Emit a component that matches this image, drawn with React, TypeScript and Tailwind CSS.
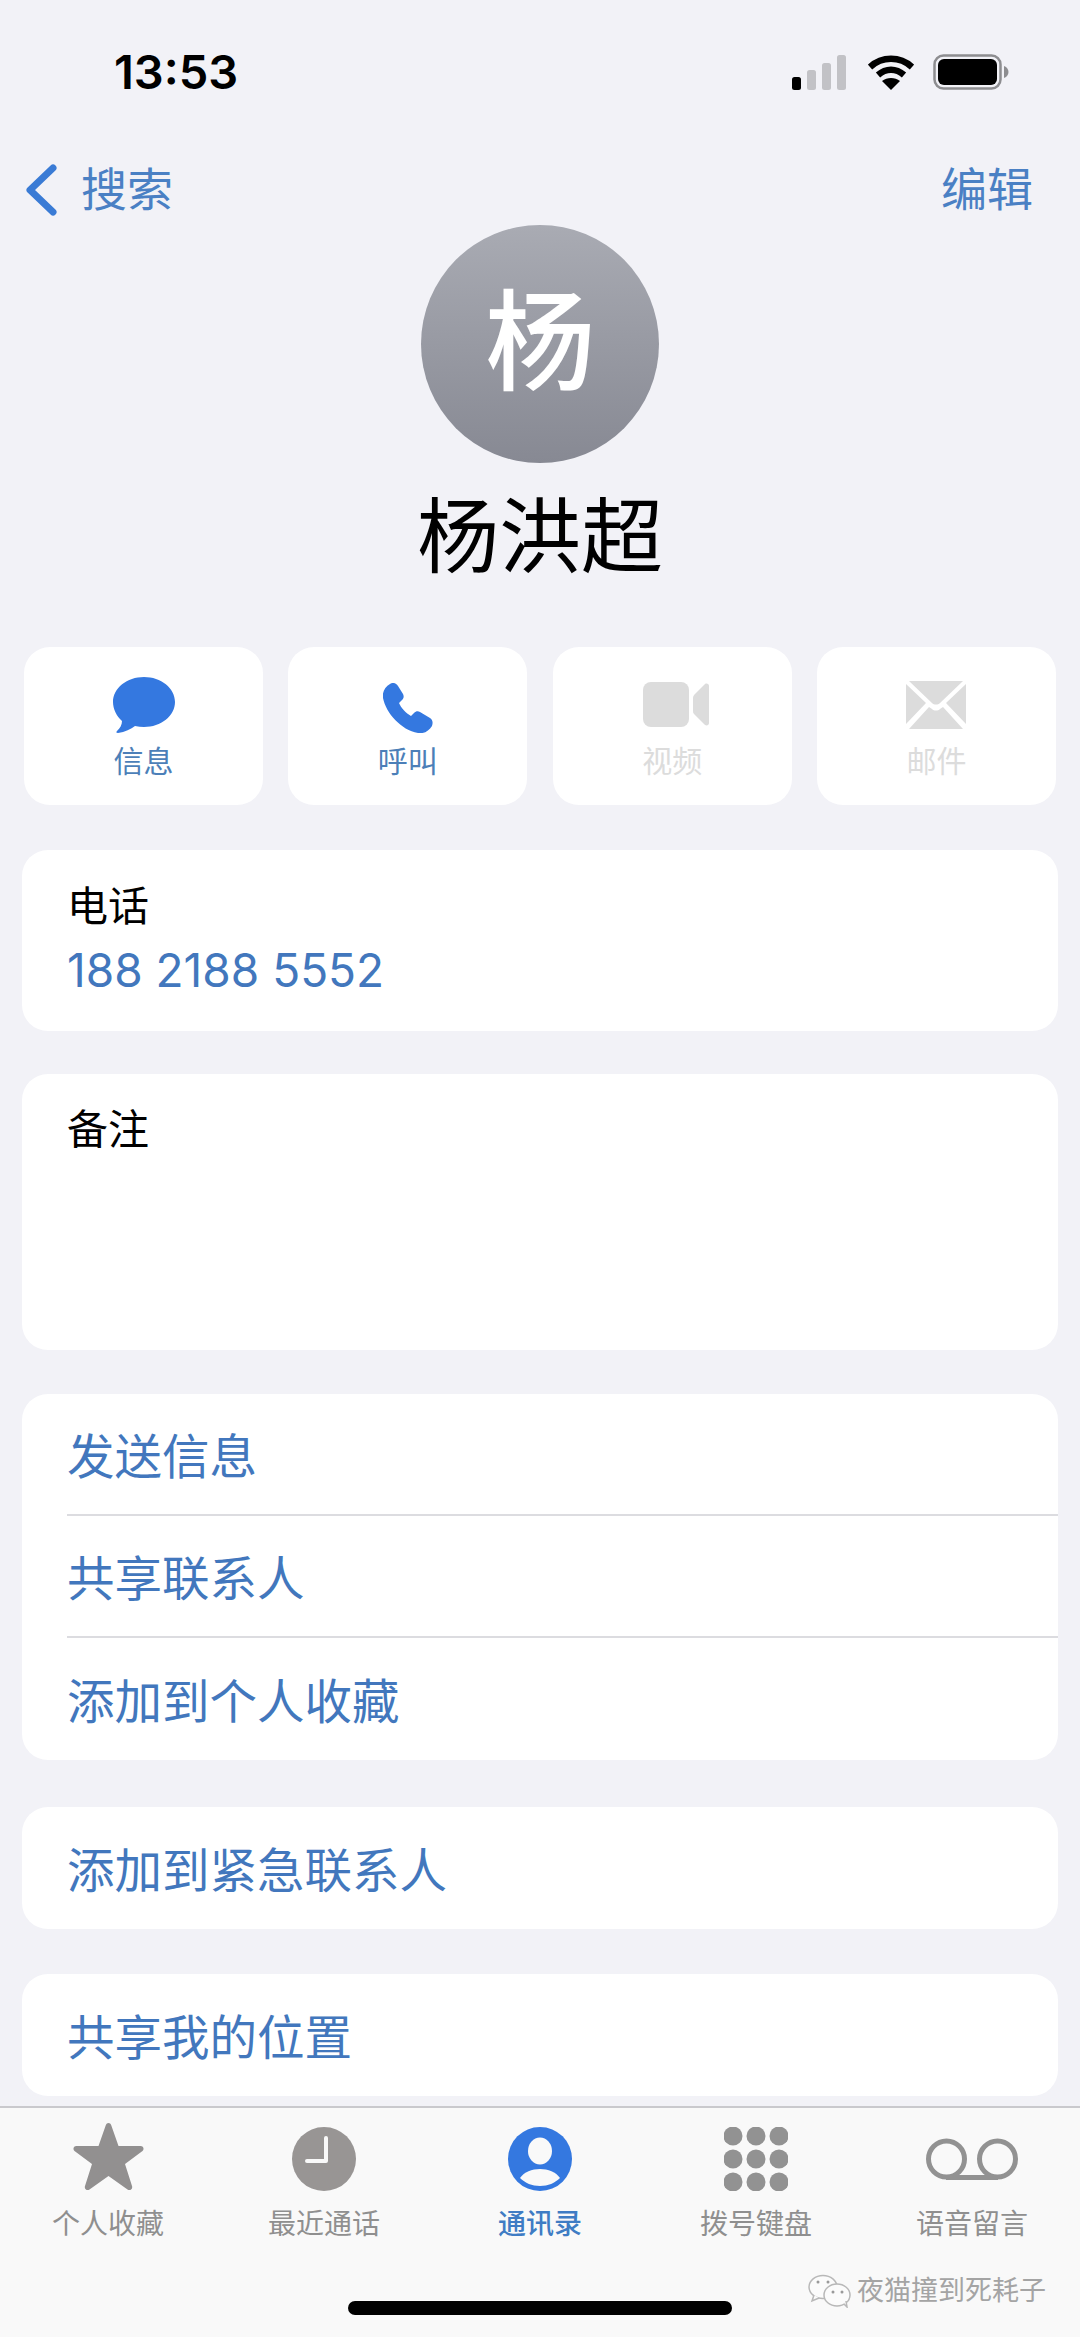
const CJK = "font-['Liberation_Sans','Noto_Sans_CJK_SC',sans-serif]";

function ActionCard({ label, disabled, children }: { label: string; disabled?: boolean; children: React.ReactNode }) {
  return (
    <div className="w-[239px] h-[158px] bg-white rounded-[26px] flex flex-col items-center">
      <div className="h-[97px] w-full flex items-end justify-center pb-[11px]">{children}</div>
      <span className={`text-[30px] leading-[36px] ${disabled ? "text-[#dcdcdc]" : "text-[#4c7fb8]"}`}>{label}</span>
    </div>
  );
}

function Row({ label, border }: { label: string; border?: boolean }) {
  return (
    <div className="h-[122px] pl-[45px]">
      <div className={`h-full flex items-center text-[47.5px] text-[#4277bd] pt-[7px] ${border ? "border-b-2 border-[#dcdce0]" : ""}`}>
        {label}
      </div>
    </div>
  );
}

function Tab({ label, active, children }: { label: string; active?: boolean; children: React.ReactNode }) {
  return (
    <div className="w-[216px] flex flex-col items-center">
      <div className="h-[70px] flex items-end justify-center">{children}</div>
      <span className={`mt-[17px] text-[28px] leading-[34px] ${active ? "text-[#3f7cc4] font-medium" : "text-[#8f8f8f]"}`}>{label}</span>
    </div>
  );
}

export default function App() {
  return (
    <div className={`${CJK} relative w-[1080px] h-[2337px] overflow-hidden bg-[#f2f2f7] flex flex-col`}>
      {/* status bar */}
      <div className="h-[155px] flex justify-between items-start pt-[45px] pl-[114px] pr-[71px]">
        <span className="font-['Inter',sans-serif] font-semibold text-[47px] leading-[54px] text-black">13:53</span>
        <div className="flex items-center pt-[9px]">
          <svg width="55" height="35" viewBox="0 0 55 35" className="mr-[21px]">
            <rect x="0" y="22" width="9" height="13" rx="2.5" fill="#000" />
            <rect x="15" y="15" width="9" height="20" rx="2.5" fill="#c2c2c6" />
            <rect x="30" y="8" width="9" height="27" rx="2.5" fill="#c2c2c6" />
            <rect x="45" y="0" width="9" height="35" rx="2.5" fill="#c2c2c6" />
          </svg>
          <svg width="46" height="35" viewBox="0 0 46 35" className="mr-[19px]">
            <path d="M2 12C14 1 32 1 44 12" fill="none" stroke="#000" strokeWidth="6.5" />
            <path d="M10 20c8-7 18-7 26 0" fill="none" stroke="#000" strokeWidth="6.5" />
            <path d="M14 26c5-4 13-4 18 0L23 35z" fill="#000" />
          </svg>
          <svg width="76" height="36" viewBox="0 0 76 36">
            <rect x="1.5" y="1.5" width="66" height="33" rx="9" fill="none" stroke="#8d8d90" strokeWidth="2.5" />
            <rect x="5" y="5" width="59" height="26" rx="6" fill="#000" />
            <path d="M71 12c3 1 4.500 3.500 4.500 6s-1.500 5-4.500 6z" fill="#8d8d90" />
          </svg>
        </div>
      </div>

      {/* nav bar */}
      <div className="h-[70px] flex justify-between items-center pl-[25px] pr-[47px]">
        <div className="flex items-center gap-[24px]">
          <svg width="32" height="52" viewBox="0 0 32 52">
            <path d="M28 4L5 26l23 22" fill="none" stroke="#3a7bd5" strokeWidth="7" strokeLinecap="round" strokeLinejoin="round" />
          </svg>
          <span className="text-[46px] leading-[54px] text-[#4a80c4]">搜索</span>
        </div>
        <span className="text-[46px] leading-[54px] text-[#4a80c4]">编辑</span>
      </div>

      {/* contact head */}
      <div className="flex flex-col items-center">
        <div className="w-[238px] h-[238px] rounded-full bg-gradient-to-b from-[#a9abb3] to-[#878993] flex items-center justify-center">
          <span className="text-white text-[110px] leading-none font-medium">杨</span>
        </div>
        <div className="mt-[20px] h-[110px] flex items-center text-[82px] leading-none text-black">杨洪超</div>
      </div>

      <div className="mt-[54px] px-[22px] flex flex-col">
        {/* action buttons */}
        <div className="mb-[45px] px-[2px] flex justify-between">
          <ActionCard label="信息">
            <svg width="62" height="56" viewBox="0 0 62 56">
              <path d="M31 0c17 0 31 11 31 25S48 50 31 50c-3 0-6-.3-9-1-4 3-10 6-17 7-2 0-2-1-1-2 3-3 5-6 5-10C3.500 39 0 32 0 25 0 11 14 0 31 0z" fill="#3478e0" />
            </svg>
          </ActionCard>
          <ActionCard label="呼叫">
            <svg width="50" height="50" viewBox="0 0 50 50">
              <path d="M7 1c3-2 6-1 8 2l5 8c1 2 1 4-1 6l-3 3c2 5 7 10 12 13l3-3c2-2 4-2 6-1l10 6c3 2 3 5 2 8-3 5-8 8-14 7C18 47 3 30 0 15-1 9 2 4 7 1z" fill="#3478e0" />
            </svg>
          </ActionCard>
          <ActionCard label="视频" disabled>
            <svg width="66" height="46" viewBox="0 0 66 46" className="mb-[5px] ml-[7px]">
              <rect x="0" y="0" width="46" height="45" rx="8" fill="#dcdcdc" />
              <path d="M50 16c0-2 1-3 2-4l10-10c2-1 4 0 4 2v37c0 2-2 3-4 2L52 33c-1-1-2-2-2-4z" fill="#dcdcdc" />
            </svg>
          </ActionCard>
          <ActionCard label="邮件" disabled>
            <svg width="60" height="48" viewBox="0 0 60 48" className="mb-[4px]">
              <path d="M3 0h54L34 22c-2 2-6 2-8 0z" fill="#dcdcdc" />
              <path d="M0 3l20 19L0 43zM60 3L40 22l20 21z" fill="#dcdcdc" />
              <path d="M3 48l20-22 3 2c2 2 6 2 8 0l3-2 20 22z" fill="#dcdcdc" />
            </svg>
          </ActionCard>
        </div>

        {/* phone */}
        <div className="h-[181px] bg-white rounded-[26px] pl-[45px] pt-[30px] mb-[43px]">
          <div className="text-[41px] leading-[54px] text-black">电话</div>
          <div className="font-['Inter',sans-serif] text-[46px] leading-[72px] text-[#4277bd]">188 2188 5552</div>
        </div>

        {/* notes */}
        <div className="h-[276px] bg-white rounded-[26px] pl-[45px] pt-[29px] mb-[44px]">
          <div className="text-[41px] leading-[54px] text-black">备注</div>
        </div>

        <div className="bg-white rounded-[26px] mb-[47px]">
          <Row label="发送信息" border />
          <Row label="共享联系人" border />
          <Row label="添加到个人收藏" />
        </div>

        <div className="bg-white rounded-[26px] mb-[45px]">
          <Row label="添加到紧急联系人" />
        </div>

        <div className="bg-white rounded-[26px]">
          <Row label="共享我的位置" />
        </div>
      </div>

      {/* tab bar */}
      <div className="mt-auto h-[231px] bg-[#f9f9f9] border-t-2 border-[#c9c9cd] flex pt-[13px]">
        <Tab label="个人收藏">
          <svg width="71" height="68" viewBox="0 0 71 68">
            <path d="M35.500 0c1.500 0 2.500 1 3 3l7 20h22c3 0 4 3 2 5L52 41l7 22c1 3-2 5-4.500 3.500L35.500 53 16.500 66.500C14 68 11 66 12 63l7-22L1.500 28c-2-2-1-5 2-5h22l7-20c.5-2 1.500-3 3-3z" fill="#929090" />
          </svg>
        </Tab>
        <Tab label="最近通话">
          <svg width="64" height="64" viewBox="0 0 64 64">
            <circle cx="32" cy="32" r="32" fill="#989594" />
            <path d="M34 11v23H15" fill="none" stroke="#f9f9f9" strokeWidth="4" strokeLinecap="round" strokeLinejoin="round" />
          </svg>
        </Tab>
        <Tab label="通讯录" active>
          <svg width="64" height="64" viewBox="0 0 64 64">
            <circle cx="32" cy="32" r="32" fill="#3478e0" />
            <ellipse cx="32" cy="24" rx="12" ry="13.500" fill="#f9f9f9" />
            <path d="M12 51c4-6 12-9 20-9s16 3 20 9c-5 5-12 8-20 8s-15-3-20-8z" fill="#f9f9f9" />
          </svg>
        </Tab>
        <Tab label="拨号键盘">
          <svg width="64" height="64" viewBox="0 0 64 64">
            <g fill="#929292">
              <circle cx="9" cy="9" r="9.500" /><circle cx="32" cy="9" r="9.500" /><circle cx="55" cy="9" r="9.500" />
              <circle cx="9" cy="32" r="9.500" /><circle cx="32" cy="32" r="9.500" /><circle cx="55" cy="32" r="9.500" />
              <circle cx="9" cy="55" r="9.500" /><circle cx="32" cy="55" r="9.500" /><circle cx="55" cy="55" r="9.500" />
            </g>
          </svg>
        </Tab>
        <Tab label="语音留言">
          <svg width="92" height="42" viewBox="0 0 92 42" className="mb-[11px]">
            <circle cx="20.500" cy="21" r="18" fill="none" stroke="#929292" strokeWidth="5" />
            <circle cx="71.500" cy="21" r="18" fill="none" stroke="#929292" strokeWidth="5" />
            <path d="M20 39.500h52" fill="none" stroke="#929292" strokeWidth="5" />
          </svg>
        </Tab>
      </div>

      {/* home indicator */}
      <div className="absolute left-[348px] top-[2301px] w-[384px] h-[14px] rounded-full bg-black" />

      {/* watermark */}
      <div className="absolute left-[808px] top-[2274px] flex items-center gap-[5px]">
        <svg width="44" height="34" viewBox="0 0 44 34">
          <ellipse cx="15" cy="13" rx="14" ry="11.500" fill="#fbfbfb" stroke="#b8b8b8" strokeWidth="1.500" />
          <path d="M6 21l-2 6 7-3" fill="#fbfbfb" stroke="#b8b8b8" strokeWidth="1.500" />
          <ellipse cx="29" cy="21" rx="13" ry="11" fill="#fbfbfb" stroke="#b8b8b8" strokeWidth="1.500" />
          <path d="M36 30l3 3-1-6" fill="#fbfbfb" stroke="#b8b8b8" strokeWidth="1.500" />
          <circle cx="10" cy="8" r="1.500" fill="#9a9a9a" /><circle cx="20" cy="8" r="1.500" fill="#9a9a9a" />
          <circle cx="25" cy="18" r="1.500" fill="#9a9a9a" /><circle cx="34" cy="18" r="1.500" fill="#9a9a9a" />
        </svg>
        <span className="text-[27px] leading-[34px] text-[#a4a4a4]">夜猫撞到死耗子</span>
      </div>
    </div>
  );
}
